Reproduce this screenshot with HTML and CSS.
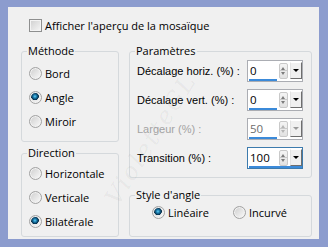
FILE: index.html
```html
<!DOCTYPE html>
<html lang="fr">
<head>
    <meta charset="UTF-8">
    <title>Mosaïque</title>
    <link rel="stylesheet" href="styles.css">
</head>
<body>
    <div class="window">
        <div class="dialog">
            <label class="check-row"><span class="checkbox"></span>Afficher l'aperçu de la mosaïque</label>

            <div class="columns">
                <div class="col-left">
                    <fieldset class="group method">
                        <legend>Méthode</legend>
                        <div class="option"><span class="radio"></span>Bord</div>
                        <div class="option"><span class="radio checked"></span>Angle</div>
                        <div class="option"><span class="radio"></span>Miroir</div>
                    </fieldset>

                    <fieldset class="group direction">
                        <legend>Direction</legend>
                        <div class="option"><span class="radio"></span>Horizontale</div>
                        <div class="option"><span class="radio"></span>Verticale</div>
                        <div class="option"><span class="radio checked"></span>Bilatérale</div>
                    </fieldset>
                </div>

                <div class="col-right">
                    <fieldset class="group params">
                        <legend>Paramètres</legend>
                        <div class="param-row">
                            <span class="param-label">Décalage horiz. (%) :</span>
                            <div class="spin">
                                <div class="spin-main">
                                    <span class="spin-value">0</span>
                                    <span class="spin-arrows"></span>
                                    <span class="spin-drop"></span>
                                </div>
                                <div class="spin-bar"></div>
                            </div>
                        </div>
                        <div class="param-row">
                            <span class="param-label">Décalage vert. (%) :</span>
                            <div class="spin">
                                <div class="spin-main">
                                    <span class="spin-value">0</span>
                                    <span class="spin-arrows"></span>
                                    <span class="spin-drop"></span>
                                </div>
                                <div class="spin-bar"></div>
                            </div>
                        </div>
                        <div class="param-row disabled">
                            <span class="param-label">Largeur (%) :</span>
                            <div class="spin">
                                <div class="spin-main">
                                    <span class="spin-value">50</span>
                                    <span class="spin-arrows"></span>
                                    <span class="spin-drop"></span>
                                </div>
                                <div class="spin-bar"></div>
                            </div>
                        </div>
                        <div class="param-row">
                            <span class="param-label">Transition (%) :</span>
                            <div class="spin focused">
                                <div class="spin-main">
                                    <span class="spin-value">100</span>
                                    <span class="spin-arrows"></span>
                                    <span class="spin-drop"></span>
                                </div>
                                <div class="spin-bar full"></div>
                            </div>
                        </div>
                    </fieldset>

                    <fieldset class="group style">
                        <legend>Style d'angle</legend>
                        <div class="style-row">
                            <div class="option inline"><span class="radio checked"></span>Linéaire</div>
                            <div class="option"><span class="radio"></span>Incurvé</div>
                        </div>
                    </fieldset>
                </div>
            </div>

            <span class="watermark">VioletteGL</span>
        </div>
    </div>
</body>
</html>
```

FILE: styles.css
```css
html, body {
    margin: 0;
    height: 247px;
}
body {
    background: #8c9cce;
    font-family: "Open Sans", sans-serif;
    font-size: 11px;
    color: #000;
}
.window {
    height: 247px;
    padding: 7px 9px 8px 8px;
    box-sizing: border-box;
}
.dialog {
    position: relative;
    height: 100%;
    background: #f0f0f0;
    padding: 12px 0 0 13px;
    box-sizing: border-box;
    overflow: hidden;
}

/* checkbox */
.check-row {
    display: flex;
    align-items: center;
    gap: 3px;
    height: 13px;
    margin-left: 8px;
}
.checkbox {
    width: 13px;
    height: 13px;
    box-sizing: border-box;
    border: 1px solid #8e8f8f;
    background: linear-gradient(135deg, #cfcfcf, #f7f7f7);
    box-shadow: inset 0 0 0 1px #f4f4f4;
}

.columns {
    display: flex;
    gap: 10px;
    margin-top: 11px;
}
.col-left {
    width: 98px;
    display: flex;
    flex-direction: column;
    gap: 3px;
}
.col-right {
    width: 183px;
    display: flex;
    flex-direction: column;
    gap: 9px;
}

/* group boxes */
.group {
    margin: 0;
    padding: 0 8px 0 7px;
    border: 1px solid #d5d9dc;
    border-radius: 3px;
    box-sizing: border-box;
}
.group legend {
    padding: 0 1px;
    margin-left: -2px;
    line-height: 16px;
}
.method {
    height: 99px;
    padding-top: 2px;
}
.direction {
    height: 92px;
}
.params {
    height: 135px;
    padding-top: 1px;
    display: flex;
    flex-direction: column;
    gap: 7px;
}
.style {
    height: 50px;
}

/* radios */
.option {
    display: flex;
    align-items: center;
    gap: 3px;
    height: 24px;
}
.radio {
    flex: none;
    width: 13px;
    height: 13px;
    box-sizing: border-box;
    border-radius: 50%;
    border: 1px solid #a2a2a2;
    background: linear-gradient(135deg, #cdcdcd, #fbfbfb);
    box-shadow: inset 0 0 0 1px #f2f2f2;
}
.radio.checked {
    background:
        radial-gradient(circle at 45% 40%, #5fd0f5 0, #1d7fb0 1.6px, #0a4264 3px, #052d47 3.6px, rgba(5, 45, 71, 0) 4.1px),
        linear-gradient(135deg, #cdcdcd, #fbfbfb);
}
.style-row {
    display: flex;
    height: 18px;
    margin-left: 15px;
}
.style-row .option {
    height: 18px;
}
.option.inline {
    width: 81px;
}

/* parameter rows */
.param-row {
    display: flex;
    align-items: center;
    justify-content: space-between;
    height: 22px;
}
.param-label {
    font-family: "Liberation Sans", Arial, sans-serif;
    font-size: 11px;
}
.disabled .param-label {
    color: #a3a3a3;
}

.spin {
    width: 56px;
    height: 22px;
    box-sizing: border-box;
    border: 1px solid #abadb3;
    background: #fff;
    display: flex;
    flex-direction: column;
}
.spin.focused {
    border-color: #3d7bad;
}
.spin-main {
    flex: 1;
    display: flex;
    align-items: center;
    padding-top: 1px;
}
.spin-value {
    width: 28px;
    padding-left: 2px;
    font-size: 11.5px;
    line-height: 16px;
}
.disabled .spin-value {
    color: #6d6d6d;
}
.spin-arrows {
    width: 9px;
    height: 16px;
    margin-left: 1px;
    box-sizing: border-box;
    border: 1px solid #c9c9c9;
    border-radius: 2px;
    background:
        linear-gradient(#c9c9c9, #c9c9c9) center / 100% 1px no-repeat,
        linear-gradient(#f4f4f4, #e2e2e2);
    position: relative;
}
.spin-arrows::before,
.spin-arrows::after {
    content: "";
    position: absolute;
    left: 1px;
    border-left: 2.5px solid transparent;
    border-right: 2.5px solid transparent;
}
.spin-arrows::before {
    top: 3px;
    border-bottom: 3px solid #7c7c7c;
}
.spin-arrows::after {
    bottom: 3px;
    border-top: 3px solid #7c7c7c;
}
.spin-drop {
    width: 12px;
    height: 17px;
    margin-left: 2px;
    box-sizing: border-box;
    background: #f0f0f0;
    border: 1px solid;
    border-color: #fff #6e6e6e #6e6e6e #e3e3e3;
    position: relative;
}
.spin-drop::after {
    content: "";
    position: absolute;
    left: 2px;
    top: 6px;
    border-left: 3px solid transparent;
    border-right: 3px solid transparent;
    border-top: 3px solid #000;
}
.disabled .spin-arrows::before {
    border-bottom-color: #b5b5b5;
}
.disabled .spin-arrows::after {
    border-top-color: #b5b5b5;
}
.disabled .spin-drop::after {
    border-top-color: #9a9a9a;
}
.spin-bar {
    width: 28px;
    height: 3px;
    margin: 0 0 0 1px;
    background: #3b8ad9;
}
.spin-bar.full {
    width: auto;
    margin-right: 0;
}

/* faint watermark over the dialog */
.watermark {
    position: absolute;
    left: 68px;
    top: 118px;
    transform: rotate(-58deg);
    font-family: "DejaVu Serif", serif;
    font-size: 24px;
    font-style: italic;
    letter-spacing: 2px;
    color: rgba(0, 0, 0, 0.05);
    pointer-events: none;
}
```
